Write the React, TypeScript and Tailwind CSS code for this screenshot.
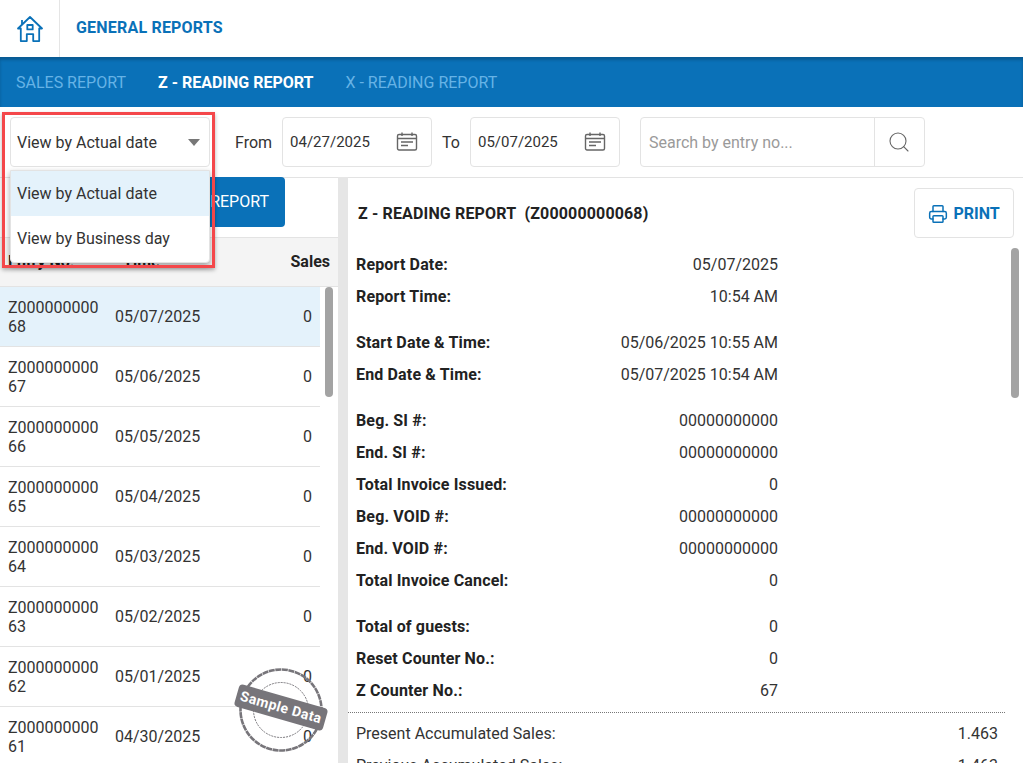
import { Printer, Search } from "lucide-react";

const entries = [
  ["Z000000000", "68", "05/07/2025"],
  ["Z000000000", "67", "05/06/2025"],
  ["Z000000000", "66", "05/05/2025"],
  ["Z000000000", "65", "05/04/2025"],
  ["Z000000000", "64", "05/03/2025"],
  ["Z000000000", "63", "05/02/2025"],
  ["Z000000000", "62", "05/01/2025"],
  ["Z000000000", "61", "04/30/2025"],
];

const groups = [
  {
    gap: "mb-[14px]",
    rows: [
      ["Report Date:", "05/07/2025"],
      ["Report Time:", "10:54 AM"],
    ],
  },
  {
    gap: "mb-[14px]",
    rows: [
      ["Start Date & Time:", "05/06/2025 10:55 AM"],
      ["End Date & Time:", "05/07/2025 10:54 AM"],
    ],
  },
  {
    gap: "mb-[14px]",
    rows: [
      ["Beg. SI #:", "00000000000"],
      ["End. SI #:", "00000000000"],
      ["Total Invoice Issued:", "0"],
      ["Beg. VOID #:", "00000000000"],
      ["End. VOID #:", "00000000000"],
      ["Total Invoice Cancel:", "0"],
    ],
  },
  {
    gap: "",
    rows: [
      ["Total of guests:", "0"],
      ["Reset Counter No.:", "0"],
      ["Z Counter No.:", "67"],
    ],
  },
];

function HomeIcon() {
  return (
    <svg width="26" height="28" viewBox="0 0 26 28" fill="none" stroke="#0a71b8" strokeWidth="1.8" strokeLinejoin="round">
      <path d="M1 13.5 13 2l12 11.5h-2.8v12.6h-6v-7h-6.4v7h-6V13.5z" />
      <rect x="10.3" y="10" width="5.4" height="4.4" />
      <path d="M5 5v4" />
    </svg>
  );
}

function CalendarIcon() {
  return (
    <svg width="22" height="22" viewBox="0 0 22 22" fill="none" stroke="#666" strokeWidth="1.4">
      <rect x="1.5" y="3.5" width="19" height="15.5" rx="1.5" />
      <path d="M1.5 7.5h19M6 1.5v3.5M16 1.5v3.5" />
      <path d="M5 11h12M5 14.5h7" />
    </svg>
  );
}

function DateBox({ value }: { value: string }) {
  return (
    <div className="flex h-[50px] w-[150px] items-center justify-between rounded border border-[#e3e3e3] pl-[7px] pr-[13px] text-[15px] text-[#333]">
      <span className="pt-0.5">{value}</span>
      <CalendarIcon />
    </div>
  );
}

function Stamp() {
  return (
    <div className="absolute left-[236px] top-[667px] h-[88px] w-[88px]">
      <svg width="88" height="88" viewBox="0 0 88 88" fill="none" stroke="#77757a">
        <circle cx="45" cy="43" r="40.5" strokeWidth="2.6" strokeDasharray="6 0.6" />
        <circle cx="45" cy="43" r="27.5" strokeWidth="1" strokeDasharray="2 1" />
      </svg>
      <div className="absolute left-[-1px] top-[29px] flex h-[23px] w-[92px] rotate-[16deg] items-center justify-center rounded-sm bg-[#77757a] text-[14px] font-bold tracking-[0.4px] text-white [font-family:'Liberation_Sans',sans-serif]">
        Sample Data
      </div>
    </div>
  );
}

export default function App() {
  return (
    <div className="relative h-[763px] w-[1023px] overflow-hidden bg-white text-[#222] [font-family:Roboto,sans-serif]">
      {/* top bar */}
      <div className="flex h-[57px] items-center">
        <div className="flex h-full w-[60px] items-center justify-center border-r border-[#e5e5e5]">
          <HomeIcon />
        </div>
        <div className="pb-px pl-4 text-base font-bold tracking-[0.2px] text-[#0a71b8]">GENERAL REPORTS</div>
      </div>

      <div className="flex h-[50px] items-center gap-8 bg-[#0a71b8] pl-4 pt-px text-base shadow-[inset_0_3px_3px_rgba(0,0,0,0.2)]">
        <span className="text-[#66b3e6]">SALES REPORT</span>
        <span className="font-bold text-white">Z - READING REPORT</span>
        <span className="text-[#66b3e6]">X - READING REPORT</span>
      </div>

      {/* filters */}
      <div className="flex h-[71px] items-center border-b border-[#e3e3e3] pb-px pl-[10px]">
        <div className="flex h-[50px] w-[200px] items-center justify-between rounded border border-[#e3e3e3] pl-[6px] pr-[9px] pt-0.5 text-base text-[#333]">
          <span>View by Actual date</span>
          <span className="h-0 w-0 border-x-[6px] border-t-[7px] border-x-transparent border-t-[#777]" />
        </div>
        <span className="ml-[25px] mr-[10px] pt-0.5 text-base text-[#333]">From</span>
        <DateBox value="04/27/2025" />
        <span className="ml-[10px] mr-[10px] pt-0.5 text-base text-[#333]">To</span>
        <DateBox value="05/07/2025" />
        <div className="ml-5 flex h-[50px] w-[285px] items-center rounded border border-[#e3e3e3]">
          <span className="flex-1 pl-2 pt-0.5 text-base text-[#9a9a9a]">Search by entry no...</span>
          <span className="flex h-full w-[50px] items-center justify-center border-l border-[#e3e3e3]">
            <Search size={24} strokeWidth={1.1} color="#666" />
          </span>
        </div>
      </div>

      <div className="-mt-px flex h-[586px]">
        {/* entry list */}
        <div className="relative w-[338px] shrink-0 overflow-hidden">
          <div className="flex h-[60px] justify-end pr-[53px]">
            <div className="flex h-[50px] w-[160px] items-center justify-end rounded bg-[#0a71b8] pr-4 text-base text-white">
              VIEW REPORT
            </div>
          </div>
          <div className="flex h-[50px] items-center border-y border-[#e3e3e3] bg-[#f4f4f4] text-base font-bold">
            <span className="w-[115px] pl-2">Entry No.</span>
            <span className="pl-2">Time</span>
            <span className="ml-auto pr-2">Sales</span>
          </div>
          <div className="w-[320px]">
            {entries.map((entry, i) => (
              <div
                key={entry[1]}
                className={`flex h-[60px] items-center border-b border-[#e3e3e3] text-base text-[#333] ${i === 0 ? "bg-[#e4f2fb]" : ""}`}
              >
                <div className="w-[115px] pl-2 leading-[19px]">
                  {entry[0]}
                  <br />
                  {entry[1]}
                </div>
                <div className="flex-1">{entry[2]}</div>
                <div className="pr-2">0</div>
              </div>
            ))}
          </div>
          <div className="absolute left-[325px] top-[110px] h-[110px] w-2 rounded bg-[#a3a3a3]" />
        </div>

        <div className="w-[10px] shrink-0 bg-[#e6e6e6]" />

        {/* report detail */}
        <div className="relative flex-1 overflow-hidden">
          <div className="flex h-[72px] items-center justify-between pl-[10px] pr-[9px]">
            <span className="pt-0.5 text-base font-bold tracking-[0.15px] text-[#222]">
              Z - READING REPORT&nbsp;&nbsp;(Z00000000068)
            </span>
            <div className="flex h-[50px] w-[100px] items-center justify-center gap-[5px] rounded border border-[#e3e3e3] pt-0.5 text-base font-bold text-[#0a71b8]">
              <Printer size={20} strokeWidth={1.8} />
              PRINT
            </div>
          </div>
          <div className="w-[430px] pl-2">
            {groups.map((group) => (
              <div key={group.rows[0][0]} className={group.gap}>
                {group.rows.map(([label, value]) => (
                  <div key={label} className="flex h-8 items-center justify-between text-base">
                    <span className="font-bold tracking-[0.15px] text-[#222]">{label}</span>
                    <span className="text-[#333]">{value}</span>
                  </div>
                ))}
              </div>
            ))}
          </div>
          <div className="mr-[18px] mt-[5px] border-t border-dotted border-[#777]" />
          <div className="flex h-[42px] items-center justify-between pl-2 pr-[25px] text-base text-[#333]">
            <span>Present Accumulated Sales:</span>
            <span>1.463</span>
          </div>
          <div className="flex h-[22px] items-center justify-between pl-2 pr-[25px] text-base text-[#333]">
            <span>Previous Accumulated Sales:</span>
            <span>1.463</span>
          </div>
          <div className="absolute right-[4px] top-[71px] h-[150px] w-2 rounded bg-[#a3a3a3]" />
        </div>
      </div>

      {/* open dropdown */}
      <div className="absolute left-[10px] top-[170px] w-[200px] rounded-b border border-[#e3e3e3] bg-white text-base text-[#333] shadow-[0_3px_6px_rgba(0,0,0,0.35)]">
        <div className="flex h-[45px] items-center bg-[#e4f2fb] pl-[6px]">View by Actual date</div>
        <div className="flex h-[46px] items-center pl-[6px]">View by Business day</div>
      </div>

      {/* highlight box */}
      <div className="absolute left-[2px] top-[112px] h-[156px] w-[213px] border-[3px] border-[#f4474a] shadow-[0_2px_4px_rgba(0,0,0,0.3)]" />

      <Stamp />
    </div>
  );
}
